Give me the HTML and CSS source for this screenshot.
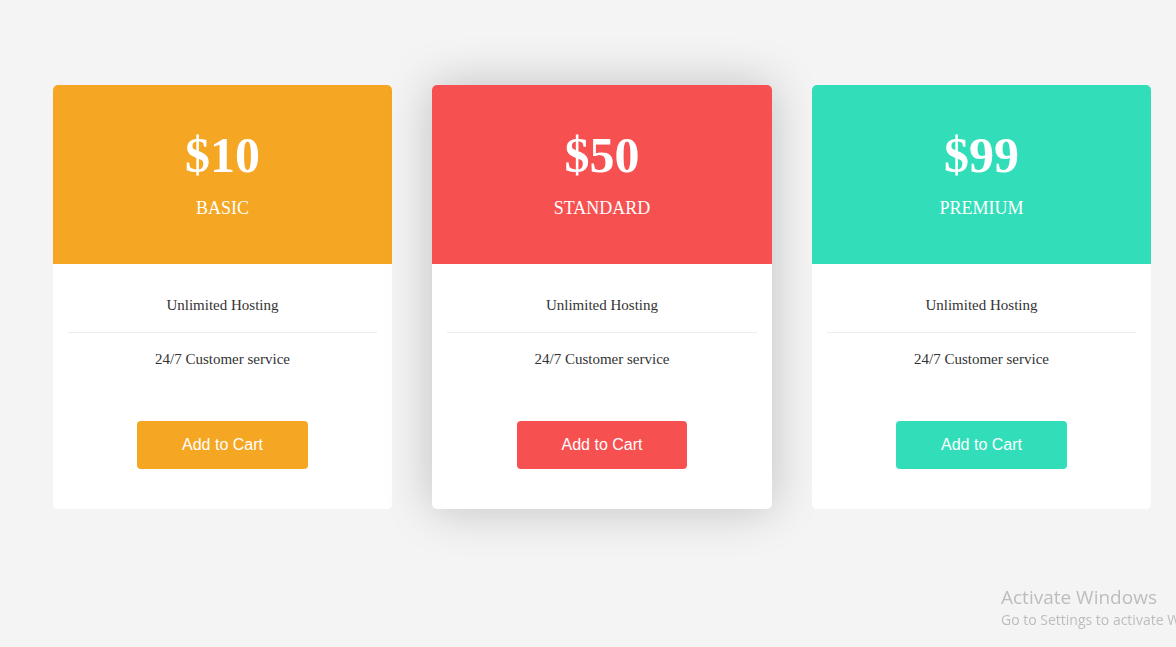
FILE: index.html
```html
<!DOCTYPE html>
<html>
<head>
<meta charset="utf-8">
<link rel="stylesheet" href="styles.css">
</head>
<body>
<div class="pricing">
  <div class="card card-basic">
    <div class="card-head">
      <div class="price">$10</div>
      <div class="plan">BASIC</div>
    </div>
    <div class="card-body">
      <ul class="features">
        <li>Unlimited Hosting</li>
        <li>24/7 Customer service</li>
      </ul>
      <button class="btn">Add to Cart</button>
    </div>
  </div>
  <div class="card card-standard">
    <div class="card-head">
      <div class="price">$50</div>
      <div class="plan">STANDARD</div>
    </div>
    <div class="card-body">
      <ul class="features">
        <li>Unlimited Hosting</li>
        <li>24/7 Customer service</li>
      </ul>
      <button class="btn">Add to Cart</button>
    </div>
  </div>
  <div class="card card-premium">
    <div class="card-head">
      <div class="price">$99</div>
      <div class="plan">PREMIUM</div>
    </div>
    <div class="card-body">
      <ul class="features">
        <li>Unlimited Hosting</li>
        <li>24/7 Customer service</li>
      </ul>
      <button class="btn">Add to Cart</button>
    </div>
  </div>
</div>
<div class="activate">
  <div class="activate-title">Activate Windows</div>
  <div class="activate-sub">Go to Settings to activate Windows.</div>
</div>
</body>
</html>
```

FILE: styles.css
```css
html, body {
  margin: 0;
  padding: 0;
  background: #f4f4f4;
  height: 100%;
  overflow: hidden;
}
body {
  font-family: "Liberation Serif", "Times New Roman", serif;
}
.pricing {
  display: flex;
  gap: 40px;
  padding: 85px 0 0 53px;
}
.card {
  width: 339px;
  background: #fff;
  border-radius: 5px;
  overflow: hidden;
}
.card-standard {
  width: 340px;
  box-shadow: 0 0 48px rgba(0, 0, 0, 0.22);
}
.card-head {
  height: 179px;
  box-sizing: border-box;
  padding-top: 46px;
  text-align: center;
  color: #fff;
}
.card-basic .card-head { background: #f5a623; }
.card-standard .card-head { background: #f75050; }
.card-premium .card-head { background: #32deb9; }
.price {
  font-size: 50px;
  font-weight: bold;
  line-height: 48px;
}
.plan {
  font-size: 18px;
  line-height: 20px;
  margin-top: 19px;
}
.card-body {
  padding: 14px 15px 40px;
  text-align: center;
}
.features {
  list-style: none;
  margin: 0;
  padding: 0;
}
.features li {
  font-size: 15px;
  line-height: 18px;
  padding: 18px 0;
  color: #333;
}
.features li + li {
  border-top: 1px solid #ececec;
  padding-top: 17px;
}
.btn {
  margin-top: 35px;
  height: 48px;
  padding: 0 45px;
  border: none;
  border-radius: 4px;
  font-family: "Liberation Sans", Arial, sans-serif;
  font-size: 16px;
  color: #fff;
  cursor: pointer;
}
.card-basic .btn { background: #f5a623; }
.card-standard .btn { background: #f75050; }
.card-premium .btn { background: #32deb9; }
.activate {
  position: fixed;
  left: 1001px;
  top: 584px;
  white-space: nowrap;
  color: #bdbdbd;
  font-family: "Open Sans", "Noto Sans", sans-serif;
}
.activate-title {
  font-size: 19px;
  line-height: 26px;
}
.activate-sub {
  font-size: 14px;
  line-height: 20px;
}
```
